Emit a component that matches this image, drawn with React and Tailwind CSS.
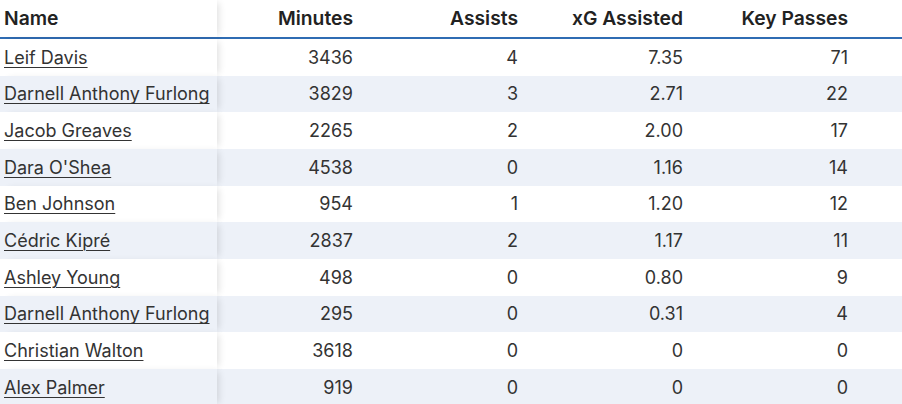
import React from 'react';

const rows = [
  ['Leif Davis', 3436, 4, '7.35', 71],
  ['Darnell Anthony Furlong', 3829, 3, '2.71', 22],
  ['Jacob Greaves', 2265, 2, '2.00', 17],
  ["Dara O'Shea", 4538, 0, '1.16', 14],
  ['Ben Johnson', 954, 1, '1.20', 12],
  ['Cédric Kipré', 2837, 2, '1.17', 11],
  ['Ashley Young', 498, 0, '0.80', 9],
  ['Darnell Anthony Furlong', 295, 0, '0.31', 4],
  ['Christian Walton', 3618, 0, '0', 0],
  ['Alex Palmer', 919, 0, '0', 0],
];

const grid = 'grid grid-cols-[217px_165px_165px_165px_165px_1fr]';
const nameCell =
  'relative z-10 flex items-center pl-1 shadow-[5px_0_7px_-3px_rgba(0,0,0,0.12)]';
const numCell = 'flex items-center justify-end pr-[29px]';

const App = () => {
  return (
    <div className="w-[902px] h-[404px] overflow-hidden bg-white text-[18px] text-[#333] font-['Inter','Noto_Sans',sans-serif]">
      {/* Header */}
      <div className={`${grid} h-[39px] border-b-2 border-[#2f6cb3] text-[19.3px] font-semibold text-[#222]`}>
        <div className={`${nameCell} bg-white`}>Name</div>
        <div className={numCell}>Minutes</div>
        <div className={numCell}>Assists</div>
        <div className={numCell}>xG Assisted</div>
        <div className={numCell}>Key Passes</div>
        <div />
      </div>

      {/* Body */}
      {rows.map((r, i) => {
        const bg = i % 2 === 1 ? 'bg-[#edf1f8]' : 'bg-white';
        return (
          <div key={i} className={`${grid} h-[36.67px] ${bg}`}>
            <div className={`${nameCell} ${bg}`}>
              <a href="#" className="underline underline-offset-[3px] decoration-1 text-[#333]">
                {r[0]}
              </a>
            </div>
            <div className={numCell}>{r[1]}</div>
            <div className={numCell}>{r[2]}</div>
            <div className={numCell}>{r[3]}</div>
            <div className={numCell}>{r[4]}</div>
            <div />
          </div>
        );
      })}
    </div>
  );
};

export default App;
